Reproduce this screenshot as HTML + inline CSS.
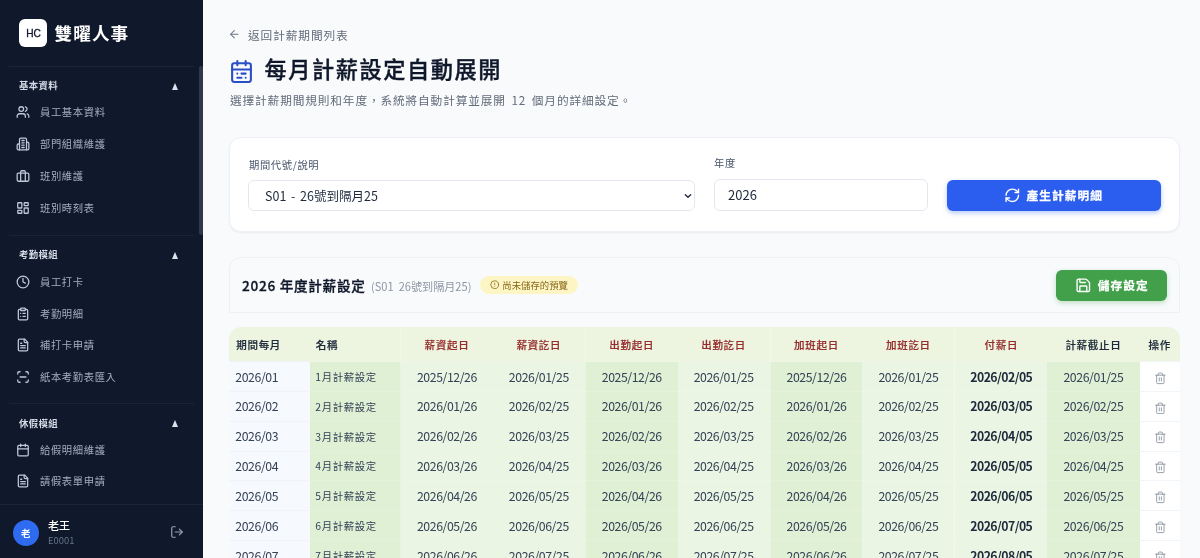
<!DOCTYPE html>
<html lang="zh-Hant">
<head>
<meta charset="utf-8">
<title>每月計薪設定自動展開</title>
<style>
*{box-sizing:border-box;margin:0;padding:0}
html,body{width:1200px;height:558px;overflow:hidden}
body{font-family:"Noto Sans CJK TC","Liberation Sans",sans-serif;background:#f8fafc;color:#1e293b;position:relative;-webkit-font-smoothing:antialiased}
svg{display:block}
.abs{position:absolute}
/* ---------- sidebar ---------- */
#side{position:absolute;left:0;top:0;width:203px;height:558px;background:#10182c;overflow:hidden}
#side .logo{position:absolute;left:19px;top:19px;width:28px;height:28px;border-radius:6px;background:#fff;color:#0f172a;font-family:'Liberation Sans',sans-serif;font-size:10.2px;font-weight:400;-webkit-text-stroke:.3px #0f172a;text-align:center;line-height:29.6px;padding-left:1px;letter-spacing:0}
#side .brand{position:absolute;left:54.4px;top:18px;height:30px;line-height:30px;font-size:17.6px;letter-spacing:1.15px;font-weight:700;color:#fff;white-space:nowrap}
#side .hr{position:absolute;left:9px;width:185px;height:1px;background:#1a2337}
#side .sec{position:absolute;left:19px;height:14px;line-height:14px;font-size:9.4px;font-weight:700;color:#d3dae5;letter-spacing:.35px;white-space:nowrap}
#side .tri{position:absolute;left:171.6px;width:0;height:0;border-left:3.7px solid transparent;border-right:3.7px solid transparent;border-bottom:7px solid #dde3ec}
#side .it{position:absolute;left:40px;height:16px;line-height:16px;font-size:10.3px;letter-spacing:.64px;color:#a3aebf;white-space:nowrap}
#side .ic{position:absolute;left:16px;width:14px;height:14px;color:#c0c9d6}
#side .ic svg{width:14px;height:14px;fill:none;stroke:currentColor;stroke-width:2.15;stroke-linecap:round;stroke-linejoin:round}
#side .thumb{position:absolute;left:198.6px;top:66px;width:4px;height:169px;border-radius:2px;background:#2f394d}
#side .foot{position:absolute;left:0;top:504px;width:203px;height:54px;background:#10182c;border-top:1px solid #1b2538}
#side .ava{position:absolute;left:12.7px;top:14.6px;width:26px;height:26px;border-radius:50%;background:#2f6bf0;color:#fff;font-size:9.4px;font-weight:700;text-align:center;line-height:26px}
#side .uname{position:absolute;left:48px;top:12px;font-size:11px;line-height:16px;color:#fff;font-weight:500}
#side .uid{position:absolute;left:48px;top:28.7px;font-size:9.4px;line-height:13px;color:#64748b}
#side .out{position:absolute;left:169.8px;top:20px;width:14px;height:14px;color:#94a3b8}
#side .out svg{width:14px;height:14px;fill:none;stroke:currentColor;stroke-width:2;stroke-linecap:round;stroke-linejoin:round}
/* ---------- main ---------- */
.back{position:absolute;left:229px;top:25.5px;height:18px;line-height:18px;font-size:11.7px;letter-spacing:.9px;color:#626b79;white-space:nowrap}
.back svg{position:absolute;left:-1px;top:2.5px;width:12.5px;height:12.5px;fill:none;stroke:#6b7482;stroke-width:2;stroke-linecap:round;stroke-linejoin:round}
.back span{position:absolute;left:19px;top:0}
.ptitle{position:absolute;left:264.5px;top:50.4px;height:36px;line-height:36px;font-size:22.2px;letter-spacing:1.55px;font-weight:500;-webkit-text-stroke:.35px #0f172a;color:#0f172a;white-space:nowrap}
.picon{position:absolute;left:229.1px;top:59.3px;width:25px;height:25px}
.picon svg{width:25px;height:25px;fill:none;stroke:#2b4ec8;stroke-width:2;stroke-linecap:round;stroke-linejoin:round}
.psub{position:absolute;left:230px;top:90.5px;height:18px;line-height:18px;font-size:11.7px;letter-spacing:.85px;word-spacing:2.2px;color:#626b79;white-space:nowrap}
.card1{position:absolute;left:229px;top:136.7px;width:951px;height:95px;background:#fff;border:1px solid #edf0f4;border-radius:12px;box-shadow:0 1px 2px rgba(15,23,42,.06)}
.lbl{position:absolute;height:14px;line-height:14px;font-size:10.3px;letter-spacing:.64px;color:#475569;white-space:nowrap}
.inp{position:absolute;background:#fff;border:1px solid #e3e7ed;border-radius:6px;font-size:12.5px;word-spacing:1.9px;color:#1e293b;white-space:nowrap}
.btn-blue{position:absolute;left:947px;top:180px;width:214px;height:31px;border-radius:6px;background:#2b5dee;box-shadow:0 2px 5px rgba(37,99,235,.35);color:#fff;font-size:11.7px;letter-spacing:1.05px;font-weight:700;-webkit-text-stroke:.25px #fff}
.card2h{position:absolute;left:229px;top:257px;width:951px;height:56px;background:#f8fafc;border:1px solid #edf0f4;border-radius:12px 12px 0 0}
.h2{position:absolute;left:242px;top:275px;height:20px;line-height:20px;font-size:13.6px;font-weight:500;letter-spacing:.72px;-webkit-text-stroke:.3px #0f172a;color:#0f172a;white-space:nowrap}
.h2s{position:absolute;left:371px;top:276px;height:20px;line-height:20px;font-size:11.1px;word-spacing:2.5px;color:#8e97a5;white-space:nowrap}
.badge{position:absolute;left:480px;top:276px;width:98px;height:18px;border-radius:9px;background:#fef5c5;color:#866818;font-size:9.4px;line-height:18px;white-space:nowrap}
.btn-green{position:absolute;left:1056px;top:270px;width:111px;height:31px;border-radius:6px;background:#41a049;box-shadow:0 2px 5px rgba(67,160,71,.3);color:#fff;font-size:11.7px;letter-spacing:1.05px;font-weight:700;-webkit-text-stroke:.25px #fff}
/* table */
#tbl{position:absolute;left:229px;top:327px;width:951px;height:240px;border-radius:12px 12px 0 0;overflow:hidden;background:#fff}
#tbl table{border-collapse:collapse;table-layout:fixed;width:951px}
#tbl th{height:34.7px;background:#edf5e0;font-size:10.5px;letter-spacing:.72px;font-weight:500;-webkit-text-stroke:.2px;color:#1e293b;text-align:center;padding:0;white-space:nowrap}
#tbl th.r{color:#962d2d}
#tbl td{height:29.8px;font-size:12.3px;letter-spacing:-.43px;color:#334155;text-align:center;padding:0;white-space:nowrap;border-top:1px solid rgba(255,255,255,.18)}
#tbl .l{text-align:left;padding-left:6.3px}
#tbl .l2{text-align:left;padding-left:5.8px}
#tbl th.l{padding-left:7.2px}
#tbl th.l2{padding-left:6.3px}
#tbl td.c0{background:#f6f9fd;border-top-color:#f0f3f8}
#tbl td.d{background:#dff0d5}
#tbl td.g{background:#eaf6e3}
#tbl td.w{background:#fff;border-top-color:#f1f4f8}
#tbl td.b{font-weight:700;color:#1e293b;letter-spacing:-.55px}
#tbl td.n{font-size:10.4px;letter-spacing:.6px}
#tbl .gl{border-left:1px solid rgba(255,255,255,.3)}
#tbl td svg{margin:0 auto;position:relative;left:.3px;top:1.6px;width:12.7px;height:12.7px;fill:none;stroke:#8c949f;stroke-width:1.7;stroke-linecap:round;stroke-linejoin:round}
</style>
</head>
<body><div id="wrap" style="position:absolute;left:0;top:0;width:1200px;height:558px;will-change:transform">
<!-- SIDEBAR -->
<div id="side">
  <div class="logo">HC</div>
  <div class="brand">雙曜人事</div>
  <div class="hr" style="top:66px"></div>
  <div class="thumb"></div>

  <div class="sec" style="top:78.2px">基本資料</div><div class="tri" style="top:82.8px"></div>
  <div class="ic" style="top:105.4px"><svg viewBox="0 0 24 24"><path d="M16 21v-2a4 4 0 0 0-4-4H6a4 4 0 0 0-4 4v2"/><circle cx="9" cy="7" r="4"/><path d="M22 21v-2a4 4 0 0 0-3-3.87"/><path d="M16 3.13a4 4 0 0 1 0 7.75"/></svg></div>
  <div class="it" style="top:104.4px">員工基本資料</div>
  <div class="ic" style="top:137.4px"><svg viewBox="0 0 24 24"><path d="M6 22V4a2 2 0 0 1 2-2h8a2 2 0 0 1 2 2v18Z"/><path d="M6 12H4a2 2 0 0 0-2 2v6a2 2 0 0 0 2 2h2"/><path d="M18 9h2a2 2 0 0 1 2 2v9a2 2 0 0 1-2 2h-2"/><path d="M10 6h4"/><path d="M10 10h4"/><path d="M10 14h4"/><path d="M10 18h4"/></svg></div>
  <div class="it" style="top:136.4px">部門組織維護</div>
  <div class="ic" style="top:169.2px"><svg viewBox="0 0 24 24"><rect x="2" y="7" width="20" height="14" rx="2"/><path d="M16 21V5a2 2 0 0 0-2-2h-4a2 2 0 0 0-2 2v16"/></svg></div>
  <div class="it" style="top:168.2px">班別維護</div>
  <div class="ic" style="top:201.1px"><svg viewBox="0 0 24 24"><rect x="3" y="3" width="7" height="9" rx="1"/><rect x="14" y="3" width="7" height="5" rx="1"/><rect x="14" y="12" width="7" height="9" rx="1"/><rect x="3" y="16" width="7" height="5" rx="1"/></svg></div>
  <div class="it" style="top:200.1px">班別時刻表</div>

  <div class="hr" style="top:235px"></div>
  <div class="sec" style="top:247.3px">考勤模組</div><div class="tri" style="top:251.9px"></div>
  <div class="ic" style="top:274.6px"><svg viewBox="0 0 24 24"><circle cx="12" cy="12" r="10"/><path d="M12 6v6l4 2"/></svg></div>
  <div class="it" style="top:273.6px">員工打卡</div>
  <div class="ic" style="top:306.5px"><svg viewBox="0 0 24 24"><rect x="8" y="2" width="8" height="4" rx="1"/><path d="M16 4h2a2 2 0 0 1 2 2v14a2 2 0 0 1-2 2H6a2 2 0 0 1-2-2V6a2 2 0 0 1 2-2h2"/><path d="M12 11h4"/><path d="M12 16h4"/><path d="M8 11h.01"/><path d="M8 16h.01"/></svg></div>
  <div class="it" style="top:305.5px">考勤明細</div>
  <div class="ic" style="top:338.1px"><svg viewBox="0 0 24 24"><path d="M15 2H6a2 2 0 0 0-2 2v16a2 2 0 0 0 2 2h12a2 2 0 0 0 2-2V7Z"/><path d="M14 2v4a2 2 0 0 0 2 2h4"/><path d="M10 9H8"/><path d="M16 13H8"/><path d="M16 17H8"/></svg></div>
  <div class="it" style="top:337.1px">補打卡申請</div>
  <div class="ic" style="top:369.6px"><svg viewBox="0 0 24 24"><path d="M3 7V5a2 2 0 0 1 2-2h2"/><path d="M17 3h2a2 2 0 0 1 2 2v2"/><path d="M21 17v2a2 2 0 0 1-2 2h-2"/><path d="M7 21H5a2 2 0 0 1-2-2v-2"/><path d="M7 12h10"/></svg></div>
  <div class="it" style="top:368.6px">紙本考勤表匯入</div>

  <div class="hr" style="top:403px"></div>
  <div class="sec" style="top:415.6px">休假模組</div><div class="tri" style="top:420.2px"></div>
  <div class="ic" style="top:442.9px"><svg viewBox="0 0 24 24"><path d="M8 2v4"/><path d="M16 2v4"/><rect x="3" y="4" width="18" height="18" rx="2"/><path d="M3 10h18"/></svg></div>
  <div class="it" style="top:441.9px">給假明細維護</div>
  <div class="ic" style="top:474.4px"><svg viewBox="0 0 24 24"><path d="M15 2H6a2 2 0 0 0-2 2v16a2 2 0 0 0 2 2h12a2 2 0 0 0 2-2V7Z"/><path d="M14 2v4a2 2 0 0 0 2 2h4"/><path d="M10 9H8"/><path d="M16 13H8"/><path d="M16 17H8"/></svg></div>
  <div class="it" style="top:473.4px">請假表單申請</div>

  <div class="foot">
    <div class="ava">老</div>
    <div class="uname">老王</div>
    <div class="uid">E0001</div>
    <div class="out"><svg viewBox="0 0 24 24"><path d="M9 21H5a2 2 0 0 1-2-2V5a2 2 0 0 1 2-2h4"/><path d="M16 17l5-5-5-5"/><path d="M21 12H9"/></svg></div>
  </div>
</div>

<!-- MAIN -->
<div class="back"><svg viewBox="0 0 24 24"><path d="M12 19l-7-7 7-7"/><path d="M19 12H5"/></svg><span>返回計薪期間列表</span></div>
<div class="picon"><svg viewBox="0 0 24 24"><path d="M8 2v4"/><path d="M16 2v4"/><rect x="3" y="4" width="18" height="18" rx="2"/><path d="M3 10h18"/><path d="M8 14h.01"/><path d="M12 14h4"/><path d="M8 18h4"/><path d="M16 18h.01"/></svg></div>
<div class="ptitle">每月計薪設定自動展開</div>
<div class="psub">選擇計薪期間規則和年度，系統將自動計算並展開 12 個月的詳細設定。</div>

<div class="card1"></div>
<div class="lbl" style="left:249px;top:158px">期間代號/說明</div>
<div class="inp" style="left:248px;top:180px;width:447px;height:31px;line-height:29px;padding-left:16px">S01 - 26號到隔月25
  <svg style="position:absolute;right:1.8px;top:10.8px;width:8px;height:8px;fill:none;stroke:#1e293b;stroke-width:4;stroke-linecap:round;stroke-linejoin:round" viewBox="0 0 24 24"><path d="M4 8l8 8 8-8"/></svg>
</div>
<div class="lbl" style="left:714px;top:156px">年度</div>
<div class="inp" style="left:714.4px;top:178.5px;width:214px;height:32.4px;line-height:30px;padding-left:12.7px;font-size:13px">2026</div>
<div class="btn-blue">
  <svg style="position:absolute;left:57.4px;top:7.3px;width:16.6px;height:16.6px;fill:none;stroke:#fff;stroke-width:2;stroke-linecap:round;stroke-linejoin:round" viewBox="0 0 24 24"><path d="M3 12a9 9 0 0 1 9-9 9.75 9.75 0 0 1 6.74 2.74L21 8"/><path d="M21 3v5h-5"/><path d="M21 12a9 9 0 0 1-9 9 9.75 9.75 0 0 1-6.74-2.74L3 16"/><path d="M8 16H3v5"/></svg>
  <span style="position:absolute;left:79.5px;top:0;line-height:30px;white-space:nowrap">產生計薪明細</span>
</div>

<div class="card2h"></div>
<div class="h2">2026 年度計薪設定</div>
<div class="h2s">(S01 26號到隔月25)</div>
<div class="badge">
  <svg style="position:absolute;left:9.8px;top:4.3px;width:9.4px;height:9.4px;fill:none;stroke:#866818;stroke-width:2;stroke-linecap:round;stroke-linejoin:round" viewBox="0 0 24 24"><circle cx="12" cy="12" r="10"/><path d="M12 8v4"/><path d="M12 16h.01"/></svg>
  <span style="position:absolute;left:22.3px;top:0">尚未儲存的預覽</span>
</div>
<div class="btn-green">
  <svg style="position:absolute;left:18.5px;top:7.3px;width:16.6px;height:16.6px;fill:none;stroke:#fff;stroke-width:2;stroke-linecap:round;stroke-linejoin:round" viewBox="0 0 24 24"><path d="M15.2 3a2 2 0 0 1 1.4.6l3.8 3.8a2 2 0 0 1 .6 1.4V19a2 2 0 0 1-2 2H5a2 2 0 0 1-2-2V5a2 2 0 0 1 2-2z"/><path d="M17 21v-7a1 1 0 0 0-1-1H8a1 1 0 0 0-1 1v7"/><path d="M7 3v4a1 1 0 0 0 1 1h7"/></svg>
  <span style="position:absolute;left:41.7px;top:0;line-height:30px;white-space:nowrap">儲存設定</span>
</div>

<div id="tbl">
<table>
<colgroup><col style="width:80.5px"><col style="width:91px"><col style="width:92.4px"><col style="width:92.4px"><col style="width:92.4px"><col style="width:92.4px"><col style="width:92.4px"><col style="width:92.4px"><col style="width:92.4px"><col style="width:92.4px"><col style="width:40.3px"></colgroup>
<thead><tr>
<th class="l">期間每月</th><th class="l2">名稱</th><th class="r gl">薪資起日</th><th class="r">薪資訖日</th><th class="r gl">出勤起日</th><th class="r">出勤訖日</th><th class="r gl">加班起日</th><th class="r">加班訖日</th><th class="r gl">付薪日</th><th>計薪截止日</th><th>操作</th>
</tr></thead>
<tbody>
<tr><td class="c0 l">2026/01</td><td class="d l2 n">1月計薪設定</td><td class="g gl">2025/12/26</td><td class="g">2026/01/25</td><td class="d gl">2025/12/26</td><td class="g">2026/01/25</td><td class="d gl">2025/12/26</td><td class="g">2026/01/25</td><td class="g b gl">2026/02/05</td><td class="d">2026/01/25</td><td class="w"><svg viewBox="0 0 24 24"><path d="M3 6h18"/><path d="M19 6v14a2 2 0 0 1-2 2H7a2 2 0 0 1-2-2V6"/><path d="M8 6V4a2 2 0 0 1 2-2h4a2 2 0 0 1 2 2v2"/><path d="M10 11v6"/><path d="M14 11v6"/></svg></td></tr>
<tr><td class="c0 l">2026/02</td><td class="d l2 n">2月計薪設定</td><td class="g gl">2026/01/26</td><td class="g">2026/02/25</td><td class="d gl">2026/01/26</td><td class="g">2026/02/25</td><td class="d gl">2026/01/26</td><td class="g">2026/02/25</td><td class="g b gl">2026/03/05</td><td class="d">2026/02/25</td><td class="w"><svg viewBox="0 0 24 24"><path d="M3 6h18"/><path d="M19 6v14a2 2 0 0 1-2 2H7a2 2 0 0 1-2-2V6"/><path d="M8 6V4a2 2 0 0 1 2-2h4a2 2 0 0 1 2 2v2"/><path d="M10 11v6"/><path d="M14 11v6"/></svg></td></tr>
<tr><td class="c0 l">2026/03</td><td class="d l2 n">3月計薪設定</td><td class="g gl">2026/02/26</td><td class="g">2026/03/25</td><td class="d gl">2026/02/26</td><td class="g">2026/03/25</td><td class="d gl">2026/02/26</td><td class="g">2026/03/25</td><td class="g b gl">2026/04/05</td><td class="d">2026/03/25</td><td class="w"><svg viewBox="0 0 24 24"><path d="M3 6h18"/><path d="M19 6v14a2 2 0 0 1-2 2H7a2 2 0 0 1-2-2V6"/><path d="M8 6V4a2 2 0 0 1 2-2h4a2 2 0 0 1 2 2v2"/><path d="M10 11v6"/><path d="M14 11v6"/></svg></td></tr>
<tr><td class="c0 l">2026/04</td><td class="d l2 n">4月計薪設定</td><td class="g gl">2026/03/26</td><td class="g">2026/04/25</td><td class="d gl">2026/03/26</td><td class="g">2026/04/25</td><td class="d gl">2026/03/26</td><td class="g">2026/04/25</td><td class="g b gl">2026/05/05</td><td class="d">2026/04/25</td><td class="w"><svg viewBox="0 0 24 24"><path d="M3 6h18"/><path d="M19 6v14a2 2 0 0 1-2 2H7a2 2 0 0 1-2-2V6"/><path d="M8 6V4a2 2 0 0 1 2-2h4a2 2 0 0 1 2 2v2"/><path d="M10 11v6"/><path d="M14 11v6"/></svg></td></tr>
<tr><td class="c0 l">2026/05</td><td class="d l2 n">5月計薪設定</td><td class="g gl">2026/04/26</td><td class="g">2026/05/25</td><td class="d gl">2026/04/26</td><td class="g">2026/05/25</td><td class="d gl">2026/04/26</td><td class="g">2026/05/25</td><td class="g b gl">2026/06/05</td><td class="d">2026/05/25</td><td class="w"><svg viewBox="0 0 24 24"><path d="M3 6h18"/><path d="M19 6v14a2 2 0 0 1-2 2H7a2 2 0 0 1-2-2V6"/><path d="M8 6V4a2 2 0 0 1 2-2h4a2 2 0 0 1 2 2v2"/><path d="M10 11v6"/><path d="M14 11v6"/></svg></td></tr>
<tr><td class="c0 l">2026/06</td><td class="d l2 n">6月計薪設定</td><td class="g gl">2026/05/26</td><td class="g">2026/06/25</td><td class="d gl">2026/05/26</td><td class="g">2026/06/25</td><td class="d gl">2026/05/26</td><td class="g">2026/06/25</td><td class="g b gl">2026/07/05</td><td class="d">2026/06/25</td><td class="w"><svg viewBox="0 0 24 24"><path d="M3 6h18"/><path d="M19 6v14a2 2 0 0 1-2 2H7a2 2 0 0 1-2-2V6"/><path d="M8 6V4a2 2 0 0 1 2-2h4a2 2 0 0 1 2 2v2"/><path d="M10 11v6"/><path d="M14 11v6"/></svg></td></tr>
<tr><td class="c0 l">2026/07</td><td class="d l2 n">7月計薪設定</td><td class="g gl">2026/06/26</td><td class="g">2026/07/25</td><td class="d gl">2026/06/26</td><td class="g">2026/07/25</td><td class="d gl">2026/06/26</td><td class="g">2026/07/25</td><td class="g b gl">2026/08/05</td><td class="d">2026/07/25</td><td class="w"><svg viewBox="0 0 24 24"><path d="M3 6h18"/><path d="M19 6v14a2 2 0 0 1-2 2H7a2 2 0 0 1-2-2V6"/><path d="M8 6V4a2 2 0 0 1 2-2h4a2 2 0 0 1 2 2v2"/><path d="M10 11v6"/><path d="M14 11v6"/></svg></td></tr>
</tbody>
</table>
</div>
</div></body>
</html>
